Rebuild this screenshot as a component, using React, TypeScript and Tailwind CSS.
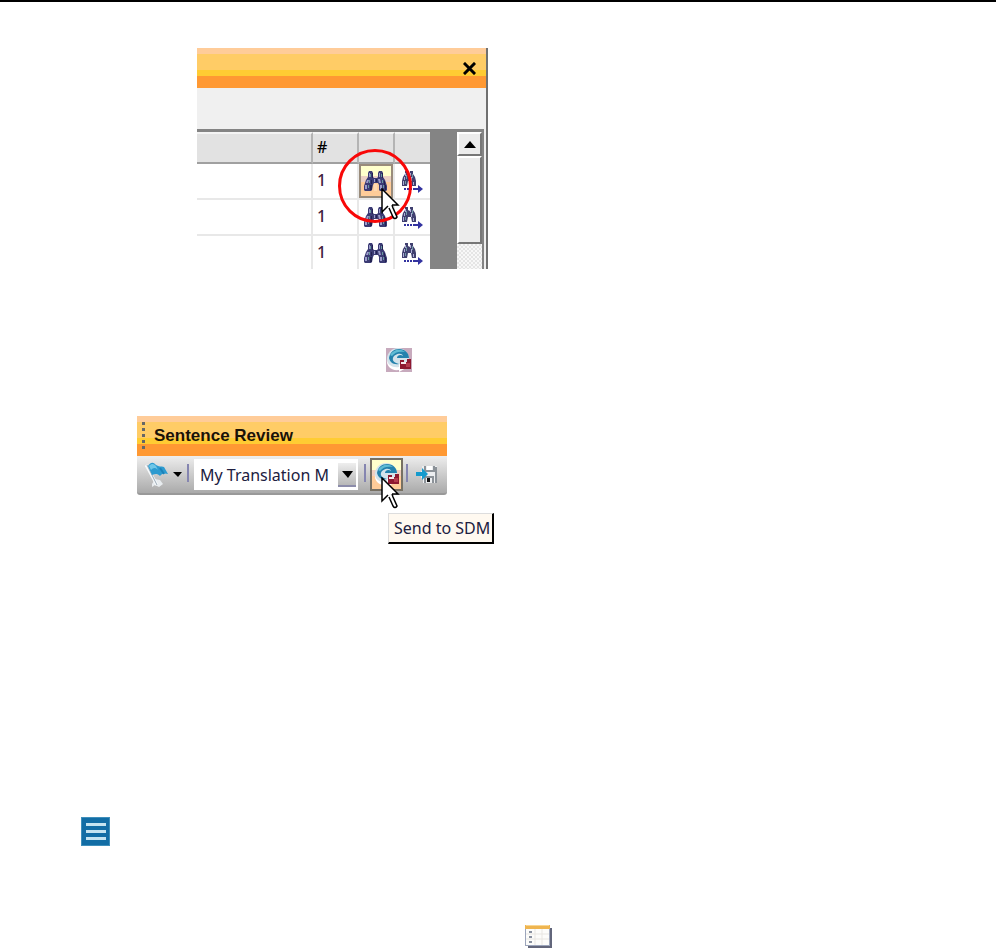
import type { ReactNode } from "react";

const rows = [1, 2, 3];

function Binoculars() {
  return (
    <svg width="24" height="20" viewBox="0 0 24 20">
      <path d="M5 0h3l1 2v4l1 1h3l1-1V2l1-2h3l1 2v4l2 3 2 6v4l-1 1h-6l-1-1v-5l-1-2h-4l-1 2-1 5-1 1H1l-1-1v-4l2-6 2-3V2z" fill="#3b3b74" />
      <path d="M5 2h1v4H5zM3 9h2l-1 3H2zM1 14h2v4H1zM15 2h1v4h-1zM14 8h2l1 4h-2zM16 14h2v4h-2zM10 8h1v3h-1z" fill="#9c9ccb" />
      <path d="M6 3h1v3H6zM5 9h1v3H5zM4 14h1v3H4zM17 3h1v3h-1zM18 9h1v3h-1zM19 14h1v3h-1z" fill="#6a9aa0" />
      <path d="M8 2h1v5H8zM7 9h1v4H7zM6 14h2v5H6zM18 2h1v5h-1zM20 10h1v4h1v5h-1v-5h-1zM12 8h1v3h-1z" fill="#222252" />
      <path d="M10 13h3v7h-3z" fill="#fff" opacity=".25" />
    </svg>
  );
}

function BinocularsNext() {
  return (
    <svg width="24" height="24" viewBox="0 0 24 24">
      <path d="M4 0h3v3l2 1V0h3v3l2 3 1 4v5h-4l-1-5H7l-1 5H1v-5l1-4 2-3z" fill="#40406f" />
      <path d="M4 2h1v3H4zM3 6h1v3H3zM2 10h1v4H2zM9 2h1v3H9zM10 6h1v4h-1zM12 11h1v3h-1z" fill="#b0b0d8" />
      <path d="M5 4h1v4H5zM11 3h1v4h-1zM4 10h1v3H4z" fill="#7098a6" />
      <path d="M3 17h2v2H3zm3 0h2v2H6zm3 0h2v2H9zm3 0h5v-3l5 4-5 4v-3h-5z" fill="#3333a0" />
    </svg>
  );
}

function Cursor() {
  return (
    <svg width="20" height="33" viewBox="0 0 20 33">
      <path d="M1 1v23l6-6 10-1z" fill="#fff" />
      <path d="m8 20 4 9q2 3 4 0l-4-9-1-3" fill="#fff" stroke="#000" strokeWidth="1.5" />
      <path d="M7 18 1 24V1l16 16h-6" fill="#fff" stroke="#000" strokeWidth="1.5" />
    </svg>
  );
}

function SendGlyph() {
  return (
    <svg width="26" height="24" viewBox="0 0 26 24">
      <circle cx="12" cy="11" r="11" fill="#d3e3eb" />
      <path d="M3 10C4 4 8 1 13 1c6 0 10 4 10 9H11c0-3 4-4 6-2C16 4 8 6 7 10c-1 3 2 5 6 6C7 17 4 14 3 10" fill="#2382ad" />
      <path d="M4 7c3-5 10-7 15-3-6-1-10 0-13 4z" fill="#5fbcd4" />
      <path d="M1 11c0 6 6 9 12 8v-3l7 4-7 4v-2C5 23 0 18 1 11" fill="#fff" />
      <path d="M14 12h4v2h3v-3h4v10H14z" fill="#8e1930" />
      <path d="M20 15h4v4h-4z" fill="#b43a4d" />
      <path d="M15 14h5v2h-5z" fill="#f8e9ed" />
    </svg>
  );
}

function FlagGlyph() {
  return (
    <svg width="24" height="26" viewBox="0 0 24 26">
      <path d="m7 22 3-5 5 1 3 4-4 3-4-2-3 2z" fill="#e8ecef" />
      <path d="m1 3 11 20" stroke="#f4f8fa" strokeWidth="3" />
      <path d="m2 3 10 20" stroke="#9caab6" />
      <path d="M3 4c3-4 5-4 8-1 3 2 5 1 8 2l4 7c-3-1-6-1-8 2-3-3-5-2-8-1z" fill="#2d9bd0" />
      <path d="M4 4c3-3 5-2 7 0l2 4c-3-3-5-2-7 0z" fill="#70c7e8" />
      <path d="m15 6 4 6" stroke="#1c82b8" strokeWidth="2" />
    </svg>
  );
}

function SaveGlyph() {
  return (
    <svg width="24" height="20" viewBox="0 0 24 20">
      <path d="M6 1h15v17H7v-5H5V6h1z" fill="#eceef0" />
      <path d="M9 1v5h9V1M20 2v16M9 18v-6h8v6" fill="none" stroke="#8c9298" strokeWidth="2" />
      <path d="M11 1h5v4h-5z" fill="#fff" />
      <path d="M11 13h3v4h-3z" fill="#111" />
      <path d="M0 7h6V3l6 6-6 6v-4H0z" fill="#159bcd" />
    </svg>
  );
}

function TableGlyph() {
  return (
    <svg width="28" height="23" viewBox="0 0 28 23" className="block">
      <path d="M3 3h24v20H3z" fill="#62667b" />
      <path d="M0 0h25v21H0z" fill="#9ca5bb" />
      <path d="M1 4h23v16H1z" fill="#fcfcfa" />
      <path d="M0 0h25v4H0z" fill="#efb550" />
      <path d="M1 0h23v1H1z" fill="#f9d692" />
      <path d="M1 9h23M1 14h23M10 4v16M17 4v16" stroke="#e8e6e2" />
      <path d="M4 7h3M4 12h3M4 17h3" stroke="#8991a0" strokeWidth="2" />
    </svg>
  );
}

function TitleBar({ children }: { children?: ReactNode }) {
  return (
    <div className="flex h-10 items-center bg-[linear-gradient(#ffcc99_0_6px,#ffcc66_6px_22px,#ffcc33_22px_28px,#ff9933_28px)]">
      {children}
    </div>
  );
}

function Separator() {
  return <span className="mb-1 h-[18px] w-[2px] bg-[#8585b0]" />;
}

function ResultsPanel() {
  return (
    <section className="ml-[197px] w-[291px] border-r-2 border-[#707070] bg-[#f0f0f0]">
      <TitleBar>
        <button aria-label="Close" className="mr-[10px] ml-auto">
          <svg width="13" height="13" viewBox="0 0 13 13" className="block">
            <path d="m2 2 9 9M11 2l-9 9" stroke="#000" strokeWidth="3" strokeLinecap="square" />
          </svg>
        </button>
      </TitleBar>
      <div className="h-[41px]" />
      <div className="mr-[2px] flex h-[140px] overflow-hidden border-t-[3px] border-r-2 border-[#848484] bg-[#848484]">
        <table className="w-[233px] table-fixed border-separate border-spacing-0 bg-white text-[16px]">
          <thead>
            <tr className="h-8 bg-[#e2e2e2]">
              <th aria-label="Sentence" className="border-t-2 border-r-2 border-b-2 border-t-[#f4f4f4] border-r-[#b4b4b4] border-b-[#a0a0a0]" />
              <th className="w-[46px] border-t-2 border-r-2 border-b-2 border-t-[#f4f4f4] border-r-[#b4b4b4] border-b-[#a0a0a0] p-0 pb-[2px] pl-1 text-left font-[Noto_Sans,sans-serif] leading-5 font-medium">#</th>
              <th aria-label="Find" className="w-9 border-t-2 border-r-2 border-b-2 border-t-[#f4f4f4] border-r-[#b4b4b4] border-b-[#a0a0a0]" />
              <th aria-label="Find next" className="w-[35px] border-t-2 border-b-2 border-t-[#f4f4f4] border-b-[#a0a0a0]" />
            </tr>
          </thead>
          <tbody>
            {rows.map((row) => (
              <tr key={row} className="h-9">
                <td className="border-r-2 border-b-2 border-[#e8e8e8]" />
                <td className="border-r-2 border-b-2 border-[#e8e8e8] p-0 pb-[2px] pl-1 font-[Noto_Sans,sans-serif] leading-5 font-medium text-[#40203c]">1</td>
                <td className="border-r-2 border-b-2 border-[#e8e8e8] p-0">
                  {row === 1 ? (
                    <button aria-label="Find" className="relative flex h-[34px] w-[34px] items-center justify-center border-2 border-[#998b7b] bg-[linear-gradient(#ffffcc_0_10px,#ecd0c4_10px_16px,#ffcc99_16px)]">
                      <Binoculars />
                      <span className="pointer-events-none absolute -top-[17px] -left-[23px] z-10 h-[74px] w-[74px] rounded-full border-[3px] border-[#f80808]" />
                      <span className="pointer-events-none absolute top-[22px] left-[20px] z-20"><Cursor /></span>
                    </button>
                  ) : (
                    <button aria-label="Find" className="flex h-[34px] w-[34px] items-center justify-center"><Binoculars /></button>
                  )}
                </td>
                <td className="border-b-2 border-[#e8e8e8] p-0">
                  <button aria-label="Find next" className="flex h-[34px] w-[35px] items-center justify-center pt-1"><BinocularsNext /></button>
                </td>
              </tr>
            ))}
          </tbody>
        </table>
        <div className="ml-auto w-[25px] bg-[repeating-conic-gradient(#e5e5e5_0_25%,#f8f8f8_0_50%)] bg-[length:4px_4px]">
          <button aria-label="Scroll up" className="flex h-6 w-full items-center justify-center border-2 border-t-white border-r-[#777] border-b-[#777] border-l-white bg-[#ececec]">
            <svg width="12" height="7" viewBox="0 0 12 7"><path d="m6 0 6 7H0z" /></svg>
          </button>
          <div className="h-[88px] border-2 border-t-white border-r-[#777] border-b-[#777] border-l-white bg-[#ececec]" />
        </div>
      </div>
    </section>
  );
}

function ReviewToolbar() {
  return (
    <section className="ml-[137px] w-[310px]">
      <TitleBar>
        <span className="ml-[5px] h-[29px] w-[3px] bg-[repeating-linear-gradient(#666_0_3px,transparent_3px_6px)]" />
        <h2 className="ml-[9px] font-[Liberation_Sans,sans-serif] text-[17px] leading-5 font-bold text-[#1a1208]">Sentence Review</h2>
      </TitleBar>
      <div className="flex h-[39px] items-center rounded-b-[3px] border-b-2 border-[#999] bg-linear-to-b from-[#eeeeee] to-[#aaaaaa] pl-2">
        <button aria-label="Flag" className="flex w-[42px] items-center gap-1">
          <FlagGlyph />
          <svg width="9" height="5" viewBox="0 0 9 5"><path d="M0 0h9L5 5z" /></svg>
        </button>
        <Separator />
        <div className="relative ml-[5px] h-[31px] w-[164px] bg-white">
          <select aria-label="Translation memory" className="h-full w-full appearance-none pl-[6px] font-[Noto_Sans,sans-serif] text-[16px] leading-5 text-[#202040]">
            <option>My Translation M</option>
          </select>
          <span className="pointer-events-none absolute top-1 right-[2px] flex h-6 w-[18px] items-center justify-center border-b-2 border-[#8c8caa] bg-linear-to-b from-[#eeeeee] to-[#b8b8b8]">
            <svg width="11" height="7" viewBox="0 0 11 7"><path d="M0 0h11L6 7z" /></svg>
          </span>
        </div>
        <span className="w-[6px]" />
        <Separator />
        <button aria-label="Send to SDM" aria-describedby="send-tip" className="relative ml-1 flex h-[33px] w-[33px] items-center justify-center border-2 border-[#777063] bg-[linear-gradient(#ffffcc_0_10px,#f0d0c0_10px_16px,#ffcc99_16px)]">
          <SendGlyph />
          <span className="pointer-events-none absolute top-[17px] left-[9px] z-10"><Cursor /></span>
          <span id="send-tip" role="tooltip" className="absolute top-[53px] left-4 h-[31px] w-[106px] border-t border-r-2 border-b-2 border-l border-t-[#ddd] border-r-black border-b-black border-l-[#ddd] bg-[#fff9f0] pl-[5px] text-left font-[Noto_Sans,sans-serif] text-[16px] leading-7 whitespace-nowrap text-[#202040]">Send to SDM</span>
        </button>
        <span className="w-[3px]" />
        <Separator />
        <button aria-label="Save" className="ml-[8px]"><SaveGlyph /></button>
      </div>
    </section>
  );
}

export default function App() {
  return (
    <main className="flex min-h-screen flex-col items-start bg-white">
      <hr className="mb-[46px] w-full border-t-2 border-black" />
      <ResultsPanel />
      <div className="mt-[79px] ml-[386px] h-6 w-[26px] bg-[#c7aabd]"><SendGlyph /></div>
      <div className="mt-11"><ReviewToolbar /></div>
      <button aria-label="Menu" className="mt-[322px] ml-[81px] flex h-[29px] w-[29px] flex-col items-center justify-center gap-1 border border-[#3f8fbb] bg-[#126da5]">
        <span className="h-[3px] w-5 bg-[#c5e4f1]" />
        <span className="h-[3px] w-5 bg-[#c5e4f1]" />
        <span className="h-[3px] w-5 bg-[#c5e4f1]" />
      </button>
      <div className="mt-[79px] ml-[525px]"><TableGlyph /></div>
    </main>
  );
}
